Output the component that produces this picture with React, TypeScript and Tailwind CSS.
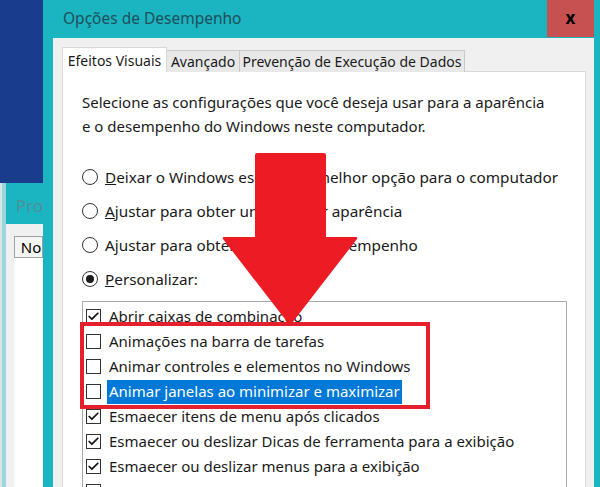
import { Check } from "lucide-react";

const items = [
    { label: "Abrir caixas de combinação", checked: true },
    { label: "Animações na barra de tarefas", checked: false },
    { label: "Animar controles e elementos no Windows", checked: false },
    { label: "Animar janelas ao minimizar e maximizar", checked: false, selected: true },
    { label: "Esmaecer itens de menu após clicados", checked: true },
    { label: "Esmaecer ou deslizar Dicas de ferramenta para a exibição", checked: true },
    { label: "Esmaecer ou deslizar menus para a exibição", checked: true },
    { label: "", checked: false },
];

function Radio({ on }: { on?: boolean }) {
    return (
        <div className="size-[16px] rounded-full border border-[#333] bg-white flex items-center justify-center shrink-0">
            {on && <div className="size-[8px] rounded-full bg-[#1a1a1a]"></div>}
        </div>
    );
}

function Box({ on }: { on?: boolean }) {
    return (
        <div className="size-[15px] border border-[#333] bg-white flex items-center justify-center shrink-0">
            {on && <Check size={13} strokeWidth={3.2} color="#111" />}
        </div>
    );
}

export default function App() {
    return (
        <div className="w-[600px] h-[487px] overflow-hidden relative flex bg-[#1a3c8c] font-['Noto_Sans',sans-serif] text-[#1a1a1a]">
            {/* janela de trás */}
            <div className="w-[43px] shrink-0 flex flex-col">
                <div className="h-[183px] shrink-0"></div>
                <div className="flex-1 flex">
                    <div className="w-[3px] bg-[#d3e6e8]"></div>
                    <div className="w-[7px] bg-[#9fd5da]"></div>
                    <div className="flex-1 flex flex-col">
                        <div className="h-[41px] bg-[#1ab5c1] pl-[10px] pt-[10px] text-[17px] text-[#4e8f99]">Pro</div>
                        <div className="flex-1 bg-[#f0f0f0] pl-[8px] pt-[12px]">
                            <div className="h-full bg-white">
                                <div className="h-[22px] border border-[#a0a0a0] bg-[#f5f5f5] pl-[6px] text-[15px] leading-[20px] text-black">No</div>
                            </div>
                        </div>
                    </div>
                </div>
            </div>

            {/* Opções de Desempenho */}
            <div className="flex-1 flex flex-col bg-[#1ab5c1] pl-[10px] pr-[6px]">
                <div className="h-[38px] shrink-0 flex items-center justify-between">
                    <span className="pl-[10px] text-[15.5px] text-[#1f4f5a]">Opções de Desempenho</span>
                    <div className="w-[47px] h-[37px] self-start bg-[#c75050] flex items-center justify-center text-[17px] font-bold text-black leading-none pb-[2px]">x</div>
                </div>
                <div className="flex-1 flex flex-col bg-[#f0f0f0] pl-[9px] pr-[8px] pt-[9px]">
                    <div className="flex items-end h-[25px] text-[14px] whitespace-nowrap relative z-10">
                        <div className="w-[105px] h-[25px] bg-white border border-b-0 border-[#d9d9d9] flex items-center justify-center">Efeitos Visuais</div>
                        <div className="w-[73px] h-[22px] bg-[#e8e8e8] border border-b-0 border-l-0 border-[#c9c9c9] flex items-center justify-center">Avançado</div>
                        <div className="w-[225px] h-[22px] bg-[#e8e8e8] border border-b-0 border-l-0 border-[#c9c9c9] flex items-center justify-center">Prevenção de Execução de Dados</div>
                    </div>
                    <div className="flex-1 -mt-px bg-white border border-[#d9d9d9] pl-[19px] pr-[18px] pt-[18px] text-[15px]">
                        <p className="leading-[24px]">
                            Selecione as configurações que você deseja usar para a aparência
                            <br />e o desempenho do Windows neste computador.
                        </p>
                        <div className="mt-[22px] flex flex-col text-[15.3px]">
                            <div className="h-[34px] flex items-center gap-[7px]">
                                <Radio />
                                <span><u>D</u>eixar o Windows escolher a melhor opção para o computador</span>
                            </div>
                            <div className="h-[34px] flex items-center gap-[7px]">
                                <Radio />
                                <span><u>A</u>justar para obter uma melhor aparência</span>
                            </div>
                            <div className="h-[34px] flex items-center gap-[7px]">
                                <Radio />
                                <span>Ajustar para obter um melhor desempenho</span>
                            </div>
                            <div className="h-[34px] flex items-center gap-[7px]">
                                <Radio on />
                                <span><u>P</u>ersonalizar:</span>
                            </div>
                        </div>
                        <div className="mt-[5px] h-[200px] border border-[#a8a8a8] pl-[3px] pt-[2px]">
                            {items.map((it, i) => (
                                <div key={i} className="h-[25px] flex items-center">
                                    <Box on={it.checked} />
                                    <span
                                        className={
                                            it.selected
                                                ? "ml-[6px] h-[24px] px-[2px] flex items-center bg-[#0078d7] text-white"
                                                : "ml-[8px]"
                                        }
                                    >
                                        {it.label}
                                    </span>
                                </div>
                            ))}
                        </div>
                    </div>
                </div>
            </div>

            {/* destaque vermelho */}
            <div className="absolute left-[80px] top-[322px] w-[350px] h-[87px] border-4 border-[#e3202b]"></div>
            <svg className="absolute left-[220px] top-[150px]" width="142" height="180" viewBox="0 0 142 180">
                <path
                    d="M37 3 Q35 3 35 5 L35 87 L4 87 Q2 87 3 89 L68 173 Q70 175 72 173 L137 89 Q138 87 136 87 L106 87 L106 5 Q106 3 104 3 Z"
                    fill="#ed1c24"
                />
            </svg>
        </div>
    );
}
